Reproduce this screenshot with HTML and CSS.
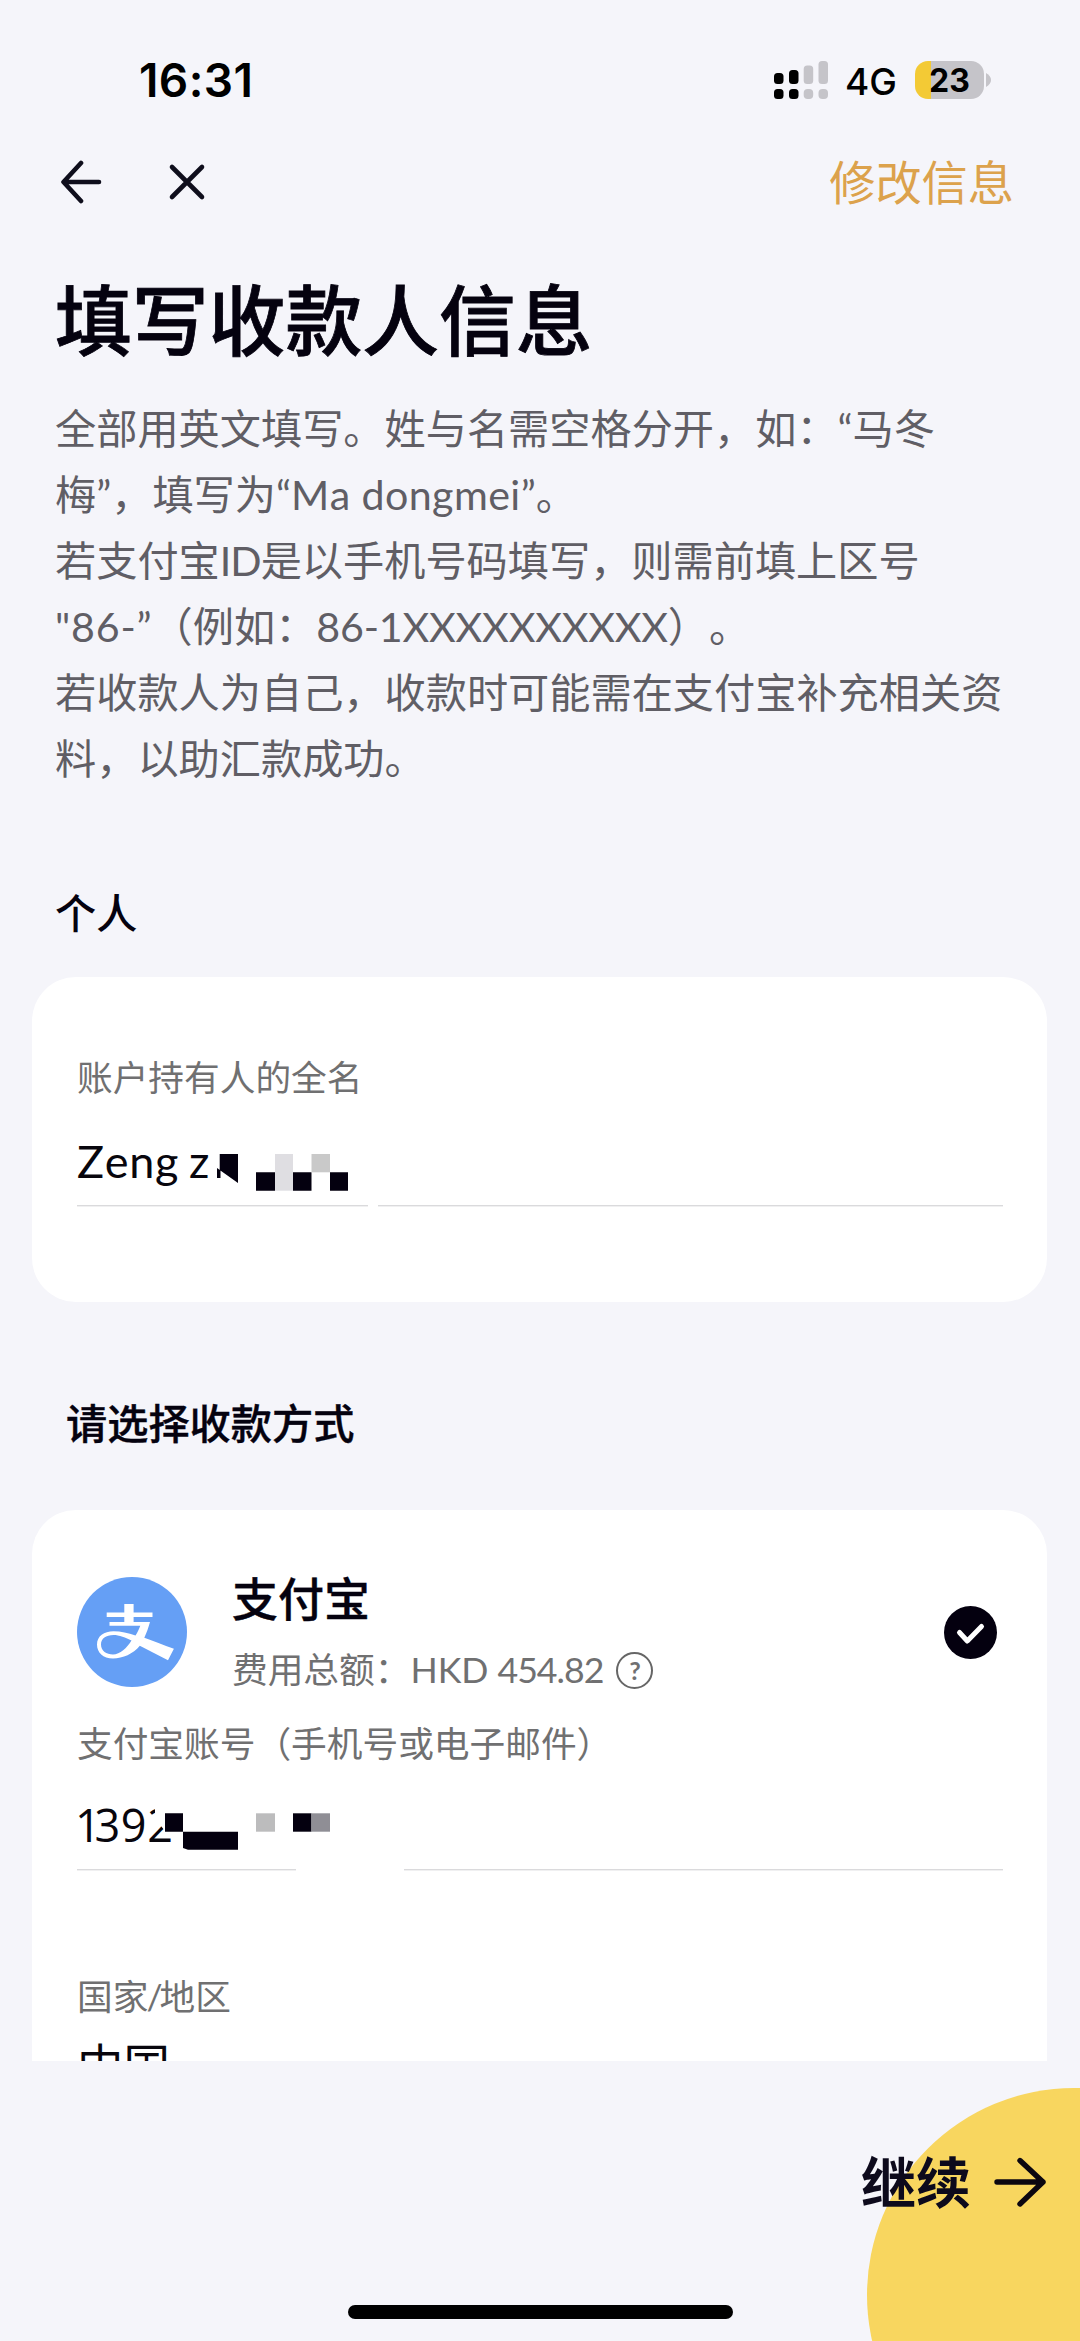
FILE: index.html
```html
<!DOCTYPE html>
<html lang="zh-CN">
<head>
<meta charset="utf-8">
<title>填写收款人信息</title>
<link rel="stylesheet" href="styles.css">
</head>
<body>
<div class="screen">
  <header class="status">
    <span class="time">16:31</span>
    <div class="status-right">
      <svg class="signal" width="55" height="38" viewBox="0 0 55 38">
        <g fill="#000"><rect x="0" y="12" width="9.5" height="11" rx="3.5"/><rect x="15" y="9" width="9.5" height="14" rx="3.5"/><rect x="0" y="28" width="9.5" height="10" rx="3.5"/><rect x="15" y="28" width="9.5" height="10" rx="3.5"/></g>
        <g fill="#c5c4c9"><rect x="29.7" y="4.5" width="9.5" height="18.5" rx="3.5"/><rect x="44.5" y="0" width="9.5" height="23" rx="3.5"/><rect x="29.7" y="28" width="9.5" height="10" rx="4"/><rect x="44.5" y="28" width="9.5" height="10" rx="4"/></g>
      </svg>
      <span class="network">4G</span>
      <span class="battery">23</span>
      <svg class="nub" width="5" height="14" viewBox="0 0 5 14"><path d="M0 0Q5 3 5 7T0 14Z" fill="#c5c4c9"/></svg>
    </div>
  </header>

  <nav class="nav">
    <svg width="44" height="44" viewBox="0 0 44 44" class="line-icon"><path d="M39 22H4M21 3L3.500 22L21 41"/></svg>
    <svg width="44" height="44" viewBox="0 0 44 44" class="line-icon close"><path d="M7 7L37 37M37 7L7 37"/></svg>
    <a class="edit">修改信息</a>
  </nav>

  <h1 class="title">填写收款人信息</h1>
  <p class="intro">全部用英文填写。姓与名需空格分开，如：“马冬<br>梅”，填写为“<span class="latin-name">Ma dongmei</span>”。<br>若支付宝<span class="latin-id">ID</span>是以手机号码填写，则需前填上区号<br><span class="latin-code">"86-</span>”（例如：<span class="latin-number">86-1XXXXXXXXXX</span>）。<br>若收款人为自己，收款时可能需在支付宝补充相关资<br>料，以助汇款成功。</p>

  <h2 class="section">个人</h2>
  <section class="card person">
    <div class="label">账户持有人的全名</div>
    <div class="value">
      <span class="holder">Zeng z</span>
      <svg class="mosaic" width="290" height="60" viewBox="0 0 290 60">
        <path d="M140 37L143.500 39.500V47H140ZM142.700 23H161V52L142.700 39Z" fill="#04000f"/>
        <path d="M179 41.300h19v18.400h-19zM216 41.300h18.500v18.400H216zM253 41.300h18v18.400h-18z" fill="#04000f"/>
        <path d="M198 23h18v36.700h-18z" fill="#dfdee2"/><path d="M234.500 23H253v18.300h-18.500z" fill="#c9c9c9"/>
      </svg>
    </div>
    <div class="rule"><i class="rule-name"></i><i class="rule-rest"></i></div>
  </section>

  <h2 class="section method">请选择收款方式</h2>
  <section class="card pay">
    <div class="provider">
      <svg width="110" height="110" viewBox="0 0 110 110">
        <circle cx="55" cy="55" r="55" fill="#659ff5"/>
        <path fill="#fff" d="M47.300 27H56.600V35.500H75.500V40H56.600V45H73C71.500 50.500 69.500 56 67.300 60.700C76 64 86.500 68 96.900 71.700L91 83.300L62.800 68.800C56 77 46 81.500 36 81.500C26 81.500 20 75.500 20 67.500C20 59 27 54.200 36.500 54.200C44 54.200 51 56 58.500 58.500C60.500 55.500 62 52 63.300 48.700H32.500V45H47.300V40H29.700V35.500H47.300ZM54.500 63.500C49 60.500 42 58 36.500 58C29 58 24 61.500 24 67.500C24 74 29.500 77.500 36 77.500C43 77.500 50 71 54.500 63.500Z"/>
      </svg>
      <div class="provider-text">
        <div class="provider-name">支付宝</div>
        <div class="fee"><span>费用总额：</span><span class="currency">HKD</span><span class="amount">454.82</span>
          <span class="help">?</span>
        </div>
      </div>
      <svg width="53" height="53" viewBox="0 0 53 53"><circle cx="26.500" cy="26.500" r="26.500" fill="#04000f"/><path d="M15.500 26.500L23.300 35L37.500 20.500" fill="none" stroke="#fff" stroke-width="5" stroke-linecap="round" stroke-linejoin="round"/></svg>
    </div>
    <div class="label account">支付宝账号（手机号或电子邮件）</div>
    <div class="value phone">
      <span class="digits"><span class="lead">1</span>392</span>
      <svg class="mosaic" width="290" height="60" viewBox="0 0 290 60">
        <path d="M78 12H100V36H88L84 31L70 38V25L78 19Z" fill="#fff"/>
        <path d="M88 18.300h18v18.400H88zM106 36.700H161V54.700H111L106 53Z" fill="#04000f"/>
        <path d="M179 18.300h19v18.400h-19z" fill="#bcbcbd"/><path d="M216 18.300h18.500v18.400H216z" fill="#04000f"/><path d="M234.500 18.300H253v18.400h-18.500z" fill="#8f8e95"/>
      </svg>
    </div>
    <div class="rule"><i class="rule-phone"></i><i class="rule-rest"></i></div>
    <div class="label country">国家<span class="slash">/</span>地区</div>
    <div class="value china">中国</div>
  </section>

  <footer class="footer">
    <div class="disc"></div>
    <div class="next"><span>继续</span><svg width="54" height="54" viewBox="0 0 54 54"><path d="M4 27H50M27 5.500L50 27L27 49" fill="none" stroke="#0c0710" stroke-width="5.400" stroke-linecap="round" stroke-linejoin="round"/></svg></div>
    <div class="home"></div>
  </footer>
</div>
</body>
</html>
```
FILE: styles.css
```css
* { box-sizing: border-box; }
body { margin: 0; background: #f5f5fa; }
.screen {
  width: 1080px; height: 2341px; overflow: hidden;
  display: flex; flex-direction: column;
  background: #f5f5fa; color: #05020f;
  font-family: Lato, "Noto Sans CJK SC", sans-serif;
  text-spacing-trim: space-all;
  font-kerning: none;
  white-space: nowrap;
}
.screen > * { flex-shrink: 0; }

.status {
  height: 140px; padding: 20px 89px 0 139px;
  display: flex; align-items: center; justify-content: space-between;
  font-family: Inter, sans-serif; color: #000;
}
.time { font-size: 46px; font-weight: 600; line-height: 60px; letter-spacing: .4px; }
.status-right { display: flex; align-items: center; }
.network { margin-left: 16px; width: 55px; font-size: 37px; line-height: 44px; padding-top: 3px; font-weight: 500; }
.battery {
  margin-left: 15px; width: 69px; height: 38px; border-radius: 13px;
  background: linear-gradient(90deg, #f3ca35 16px, #c5c4c9 16px);
  font-size: 32px; font-weight: 700; line-height: 39px; text-align: center;
}
.nub { margin-left: 2px; }

.nav { height: 84px; padding: 0 66px 0 60px; display: flex; align-items: center; }
.line-icon { fill: none; stroke: #0f0e1c; stroke-width: 4.6; stroke-linecap: round; stroke-linejoin: round; }
.close { margin-left: 61px; }
.edit { margin-left: auto; font-size: 46.200px; font-weight: 400; line-height: 60px; color: #dca24c; }

.title { margin: 48px 0 28px 55px; font-size: 76.800px; line-height: 96px; font-weight: 500; -webkit-text-stroke: .8px #05020f; }
.intro { margin: -1px 0 1px 55px; font-size: 41.200px; line-height: 66px; font-weight: 400; color: #605e65; }
.latin-id { letter-spacing: -1px; }
.latin-name { letter-spacing: .4px; }
.latin-code { letter-spacing: .8px; }
.latin-number { letter-spacing: -.2px; }
.section { margin: 91px 0 34px 55px; font-size: 41.200px; line-height: 60px; font-weight: 500; }
.method { margin: 91px 0 57px 66px; -webkit-text-stroke: .4px #05020f; }

.card { margin: 0 33px 0 32px; padding: 0 44px 0 45px; background: #fff; border-radius: 44px; }
.person { height: 325px; padding-top: 76px; }
.pay { height: 551px; padding-top: 67px; border-radius: 44px 44px 0 0; overflow: hidden; }
.label { font-size: 35.700px; line-height: 50px; color: #707071; font-weight: 400; }
.value { position: relative; margin-top: 28px; height: 60px; font-size: 45px; line-height: 60px; color: #08060d; }
.holder { letter-spacing: .7px; word-spacing: -2.500px; }
.mosaic { position: absolute; left: 0; top: 0; }
.rule { display: flex; justify-content: space-between; margin-top: 14px; height: 2px; }
.rule i { height: 2px; background: #f0f0f1; border-top: 1px solid #dadadc; }
.rule-name { width: 291px; }
.rule-name + .rule-rest { width: 625px; }
.rule-phone { width: 219px; }
.rule-phone + .rule-rest { width: 599px; }

.provider { display: flex; align-items: center; height: 110px; padding-right: 6px; }
.provider-text { display: flex; flex-direction: column; gap: 16px; margin-left: 45px; margin-right: auto; }
.provider-name { font-size: 46px; line-height: 60px; font-weight: 500; -webkit-text-stroke: .4px #05020f; }
.fee { display: flex; align-items: center; font-size: 35.700px; line-height: 50px; color: #707071; }
.amount { margin-left: 9px; letter-spacing: -1px; }
.help {
  margin-left: 13px; width: 37px; height: 37px; border: 2.500px solid #666; border-radius: 50%;
  font-size: 25px; line-height: 33px; font-weight: 700; text-align: center;
}
.account { margin-top: 32px; }
.phone { margin-top: 26px; }
.digits { margin-left: -2px; font-family: "Open Sans", sans-serif; letter-spacing: .7px; }
.lead { letter-spacing: -6.300px; }
.country { margin-top: 101px; }
.slash { margin-right: -3px; margin-left: -2px; }
.china { margin-top: 13px; font-size: 46.500px; }

.footer { position: relative; flex: 1 0 0; overflow: hidden; }
.disc { position: absolute; left: 867px; top: 27px; width: 414px; height: 414px; border-radius: 50%; background: #f8d65f; }
.next {
  position: relative; height: 80px; margin-top: 81px; padding-right: 33px;
  display: flex; align-items: center; justify-content: flex-end; gap: 22px;
  font-size: 55px; line-height: 80px; font-weight: 700; color: #0d0a1c;
}
.home { width: 385px; height: 14px; margin: 83px auto 0; border-radius: 7px; background: #000; }
```
